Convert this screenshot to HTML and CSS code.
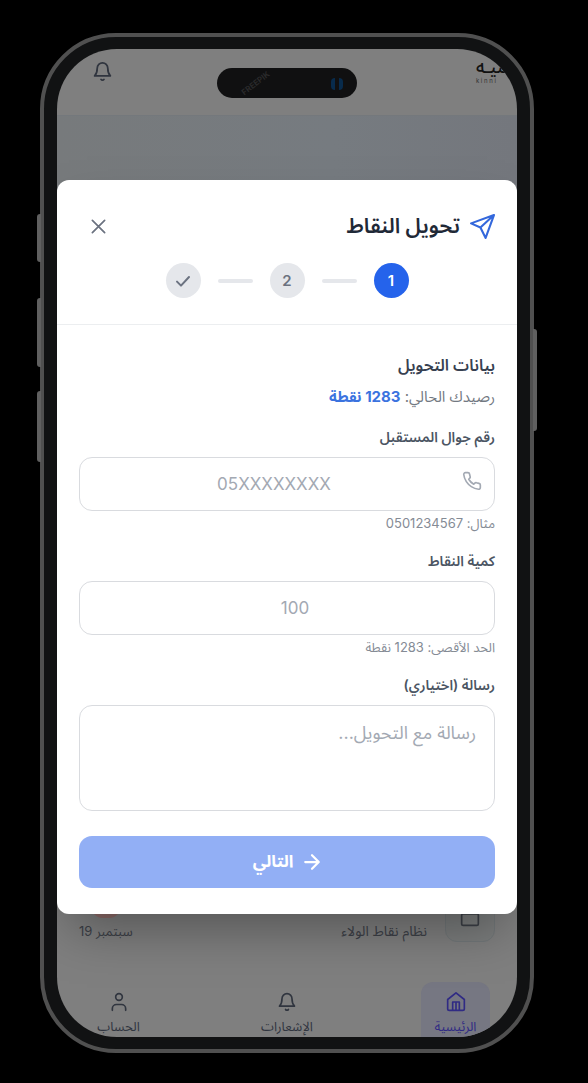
FILE: index.html
```html
<!DOCTYPE html>
<html lang="ar" dir="rtl">
<head>
<meta charset="utf-8">
<meta name="viewport" content="width=device-width, initial-scale=1">
<title>تحويل النقاط</title>
<link rel="stylesheet" href="styles.css">
</head>
<body>
<div class="phone">
  <span class="side-key key-mute"></span>
  <span class="side-key key-up"></span>
  <span class="side-key key-down"></span>
  <span class="side-key key-power"></span>
  <div class="screen">
    <div class="app">
      <header class="topbar">
        <div class="logo"><span class="logo-ar">ـنيـه</span><span class="logo-en">k i n n i</span></div>
        <button class="icon-button" type="button" aria-label="الإشعارات">
          <svg class="icon" viewBox="0 0 24 24"><path d="M6 8a6 6 0 0 1 12 0c0 5 1 7 3 9H3c2-2 3-4 3-9M10.3 21a2 2 0 0 0 3.4 0"/></svg>
        </button>
      </header>
      <div class="hero"></div>
      <div class="activity">
        <div class="activity-icon"><svg class="icon" viewBox="0 0 24 24"><rect x="2" y="8" width="20" height="14" rx="2"/><path d="M2 8h20M12 3v5"/></svg></div>
        <div class="activity-text"><span>نظام نقاط الولاء</span></div>
        <div class="activity-date"><span class="amount"></span><span>سبتمبر 19</span></div>
      </div>
      <nav class="tabs">
        <a class="tab tab-active" href="#home"><svg class="icon" viewBox="0 0 24 24"><path d="M2 9l10-8 10 8v11a2 2 0 0 1-2 2H4a2 2 0 0 1-2-2zM8 22V12h8v10M12 12v10"/></svg>الرئيسية</a>
        <a class="tab" href="#alerts"><svg class="icon" viewBox="0 0 24 24"><path d="M6 8a6 6 0 0 1 12 0c0 5 1 7 3 9H3c2-2 3-4 3-9M10.3 21a2 2 0 0 0 3.4 0"/></svg>الإشعارات</a>
        <a class="tab" href="#account"><svg class="icon" viewBox="0 0 24 24"><circle cx="12" cy="6" r="4"/><path d="M4 22v-2a5 5 0 0 1 5-5h6a5 5 0 0 1 5 5v2"/></svg>الحساب</a>
      </nav>
    </div>
    <div class="overlay">
      <form class="modal" role="dialog" aria-labelledby="title">
        <div class="modal-head">
          <div class="title-row">
            <svg class="icon send" viewBox="0 0 24 24"><path d="M23 1L1 9l9 4zM23 1L10 13l5 10z"/></svg>
            <h1 class="title" id="title">تحويل النقاط</h1>
            <button class="icon-button close" type="button" aria-label="إغلاق"><svg class="icon" viewBox="0 0 24 24"><path d="M5 5l14 14M19 5L5 19"/></svg></button>
          </div>
          <div class="steps">
            <span class="step step-current">1</span>
            <span class="step-line"></span>
            <span class="step">2</span>
            <span class="step-line"></span>
            <span class="step"><svg class="icon check" viewBox="0 0 24 24"><path d="M3 13l6 6L21 6"/></svg></span>
          </div>
        </div>
        <div class="modal-body">
          <h2 class="section">بيانات التحويل</h2>
          <p class="balance">رصيدك الحالي: <strong>1283 نقطة</strong></p>
          <label class="label" for="phone">رقم جوال المستقبل</label>
          <div class="field">
            <input class="input input-phone" id="phone" type="tel" dir="ltr" placeholder="05XXXXXXXX">
            <svg class="icon field-icon" viewBox="0 0 24 24"><path d="M22 16.9v3a2 2 0 0 1-2.2 2 19.8 19.8 0 0 1-8.6-3.1 19.5 19.5 0 0 1-6-6A19.8 19.8 0 0 1 2.1 4.2 2 2 0 0 1 4.1 2h3a2 2 0 0 1 2 1.7c.1 1 .4 1.9.7 2.8a2 2 0 0 1-.5 2.1L8.1 9.900a16 16 0 0 0 6 6l1.300-1.300a2 2 0 0 1 2.100-.4c.9.3 1.800.6 2.800.7A2 2 0 0 1 22 16.900z"/></svg>
          </div>
          <p class="hint">مثال: 0501234567</p>
          <label class="label" for="points">كمية النقاط</label>
          <input class="input input-points" id="points" type="text" inputmode="numeric" dir="ltr" placeholder="100">
          <p class="hint">الحد الأقصى: 1283 نقطة</p>
          <label class="label" for="message">رسالة (اختياري)</label>
          <textarea class="input message" id="message" placeholder="رسالة مع التحويل..."></textarea>
          <button class="next" type="submit"><svg class="icon arrow" viewBox="0 0 24 24"><path d="M3 12h18M12 3l9 9-9 9"/></svg>التالي</button>
        </div>
      </form>
    </div>
    <div class="island"><span class="watermark">FREEPIK</span><span class="lens"></span></div>
  </div>
</div>
</body>
</html>
```
FILE: styles.css
```css
* { box-sizing: border-box; }
body {
  margin: 0;
  padding: 33px 54px 30px 40px;
  background: #000;
  color: #1f2937;
  font-family: Inter, "Noto Sans Arabic", "DejaVu Sans", sans-serif;
}
h1, h2, p { margin: 0; }
button, input, textarea { font: inherit; }
.icon {
  width: 20px;
  height: 20px;
  flex: none;
  fill: none;
  stroke: currentColor;
  stroke-width: 2;
  stroke-linecap: round;
  stroke-linejoin: round;
}
.phone {
  position: relative;
  padding: 12px 13px;
  border: 4px solid #505050;
  border-radius: 76px;
  background: #111213;
}
.side-key { position: absolute; width: 4px; background: #606060; border-radius: 3px 0 0 3px; }
.key-mute { left: -7px; top: 177px; height: 48px; }
.key-up { left: -7px; top: 261px; height: 69px; }
.key-down { left: -7px; top: 354px; height: 71px; }
.key-power { right: -7px; top: 292px; height: 102px; border-radius: 0 3px 3px 0; }
.screen {
  position: relative;
  display: grid;
  overflow: hidden;
  border-radius: 60px;
  background: #7f7f7f;
}
.app, .overlay { grid-area: 1 / 1; min-width: 0; }
.app { display: flex; flex-direction: column; }
.topbar {
  display: flex;
  justify-content: space-between;
  align-items: flex-start;
  height: 67px;
  padding: 9px 5px 0 32px;
  border-bottom: 1px solid #74787c;
}
.icon-button { display: flex; padding: 3px; border: 0; background: none; color: #30353f; }
.icon-button .icon { width: 21px; height: 21px; }
.logo { display: flex; flex-direction: column; align-items: flex-end; gap: 2px; color: #111; }
.logo-ar { font-size: 18px; line-height: 18px; font-weight: 500; }
.logo-en { font-size: 6px; line-height: 6px; direction: ltr; color: #333; }
.hero { flex: 1; background: linear-gradient(90deg, #777a7c, #767b80 60%, #74777d); background-size: 100% 120px; background-repeat: no-repeat; }
.island {
  position: absolute;
  top: 19px;
  left: 160px;
  width: 140px;
  height: 30px;
  border-radius: 15px;
  background: #101011;
}
.lens { position: absolute; right: 14px; top: 10px; width: 12px; height: 12px; border-left: 4px solid #082b4c; border-right: 4px solid #082b4c; border-radius: 4px; }
.watermark { position: absolute; left: 22px; top: 9px; transform: rotate(-38deg); font-size: 8px; line-height: 12px; font-weight: 700; color: #2a2a2b; }
.activity { display: flex; gap: 18px; height: 90px; padding: 0 22px; color: #3c4047; font-size: 13px; line-height: 18px; }
.activity-icon {
  display: flex;
  align-items: center;
  justify-content: center;
  width: 50px;
  height: 50px;
  border: 1px solid #727779;
  border-radius: 12px;
  background: #7b7d7d;
}
.activity-text { flex: 1; padding-top: 30px; font-size: 14px; }
.activity-date { display: flex; flex-direction: column; align-items: center; }
.amount { width: 30px; height: 26px; margin-bottom: 4px; border-radius: 12px; background: #8c6a68; }
.tabs { display: flex; justify-content: space-between; height: 55px; padding: 0 27px; }
.tab {
  display: flex;
  flex-direction: column;
  align-items: center;
  gap: 4px;
  width: 69px;
  padding-top: 10px;
  color: #30353f;
  font-size: 13px;
  line-height: 20px;
  text-decoration: none;
}
.tab-active { border-radius: 12px 12px 0 0; background: #767782; color: #302b84; }
.overlay { z-index: 1; padding: 131px 0 123px; }
.modal { border-radius: 12px; background: #fff; box-shadow: 0 25px 50px -12px rgba(0, 0, 0, .35); }
.modal-head { padding: 28px 22px 26px; border-bottom: 1px solid #eceef0; }
.title-row { display: flex; align-items: center; gap: 10px; height: 36px; }
.send { width: 25px; height: 25px; color: #3468dc; }
.title { flex: 1; font-size: 21px; line-height: 36px; font-weight: 600; }
.close { padding: 9px; color: #6b7280; }
.steps { display: flex; align-items: center; justify-content: center; gap: 17px; margin-top: 19px; }
.step {
  display: flex;
  align-items: center;
  justify-content: center;
  width: 35px;
  height: 35px;
  border-radius: 50%;
  background: #e5e7eb;
  color: #6b7280;
  font-size: 15px;
  font-weight: 600;
}
.step-current { background: #2563eb; color: #fff; }
.step-line { width: 35px; height: 4px; border-radius: 2px; background: #e5e7eb; }
.check { width: 16px; height: 16px; stroke-width: 3; }
.modal-body { display: flex; flex-direction: column; padding: 26px 22px; }
.section { font-size: 16px; line-height: 29px; font-weight: 600; color: #374151; }
.balance { margin-top: 5px; font-size: 15px; line-height: 24px; color: #737982; }
.balance strong { font-weight: 700; color: #3b73df; }
.label { margin: 18px 0 10px; font-size: 14px; line-height: 20px; font-weight: 600; color: #4b5563; }
.field { position: relative; display: flex; }
.input {
  width: 100%;
  height: 54px;
  padding: 0 18px;
  border: 1px solid #d9dbdf;
  border-radius: 13px;
  background: #fff;
  color: #374151;
  font-size: 18px;
  text-align: center;
  outline: none;
}
.input::placeholder { color: #a3a9b3; opacity: 1; }
.input-phone, .input-points { font-size: 17px; }
.input-phone { padding-right: 44px; }
.input-points { padding-left: 34px; }
.field-icon { position: absolute; right: 13px; top: 14px; color: #a3a9b3; }
.hint { margin-top: 3px; font-size: 13px; line-height: 19px; color: #858b95; }
.message { display: block; height: 106px; padding: 14px 18px; line-height: 26px; text-align: right; resize: none; }
.next {
  display: flex;
  align-items: center;
  justify-content: center;
  gap: 10px;
  height: 52px;
  margin-top: 25px;
  border: 0;
  border-radius: 13px;
  background: #92aff5;
  color: #fff;
  font-size: 17px;
  font-weight: 700;
}
.arrow { width: 18px; height: 18px; stroke-width: 3; }
```
